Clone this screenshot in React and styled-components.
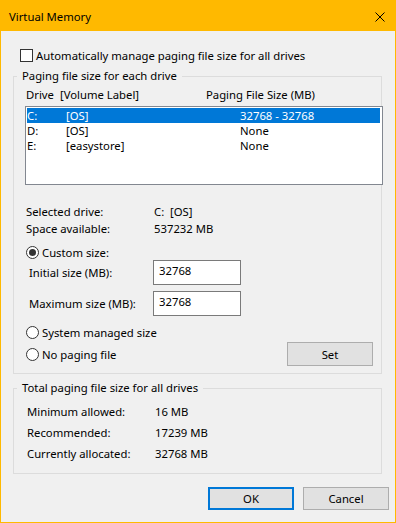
import React from 'react';
import styled, { createGlobalStyle } from 'styled-components';

const drives = [
  { letter: 'C:', label: '[OS]', size: '32768 - 32768', selected: true },
  { letter: 'D:', label: '[OS]', size: 'None' },
  { letter: 'E:', label: '[easystore]', size: 'None' },
];

const totals = [
  { label: 'Minimum allowed:', value: '16 MB' },
  { label: 'Recommended:', value: '17239 MB' },
  { label: 'Currently allocated:', value: '32768 MB' },
];

const GlobalStyle = createGlobalStyle`
  * { box-sizing: border-box; }
  html, body {
    margin: 0;
    padding: 0;
    background: #f0f0f0;
  }
  body {
    font-family: "Noto Sans", "Open Sans", sans-serif;
    font-size: 11.3px;
    color: #000;
  }
`;

const Window = styled.div`
  width: 396px;
  height: 523px;
  border: 1px solid #ffb900;
  background: #f0f0f0;
  display: flex;
  flex-direction: column;
`;

const TitleBar = styled.div`
  height: 30px;
  flex: none;
  background: #ffb900;
  display: flex;
  align-items: center;
  justify-content: space-between;
  padding-left: 8px;
  padding-top: 1px;
`;

const CloseIcon = styled.svg`
  width: 10px;
  height: 10px;
  margin-right: 10px;
`;

const Body = styled.div`
  display: flex;
  flex-direction: column;
  padding: 0 9px 0 12px;
`;

const CheckRow = styled.label`
  display: flex;
  align-items: center;
  gap: 3px;
  height: 15px;
  margin: 17px 0 0 7px;
`;

const Box = styled.span`
  width: 13px;
  height: 13px;
  border: 1px solid #333;
  background: #fff;
  flex: none;
`;

const Group = styled.fieldset`
  margin: ${(p) => p.$top}px 0 0 0;
  padding: 0;
  width: 369px;
  min-width: 0;
  border: 1px solid #dcdcdc;
`;

const Legend = styled.legend`
  margin-left: 3px;
  padding: 0 5px;
  line-height: 16px;
`;

const GroupInner = styled.div`
  display: flex;
  flex-direction: column;
  padding: 3px 8px 7px 12px;
`;

const Header = styled.div`
  display: grid;
  grid-template-columns: 180px 1fr;
  line-height: 16px;
`;

const HeaderLeft = styled.div`
  display: flex;
  gap: 6px;
`;

const ListBox = styled.div`
  margin: 3px 0 0 -1px;
  width: 358px;
  height: 79px;
  border: 1px solid #828790;
  background: #fff;
  padding: 1px 2px 1px 1px;
  display: flex;
  flex-direction: column;
`;

const ListRow = styled.div`
  display: grid;
  grid-template-columns: 39px 174px 1fr;
  height: 15px;
  line-height: 15px;
  overflow: hidden;
  background: ${(p) => (p.$selected ? '#0078d7' : 'transparent')};
  color: ${(p) => (p.$selected ? '#fff' : '#000')};
`;

const InfoGrid = styled.div`
  display: grid;
  grid-template-columns: 128px 1fr;
  grid-auto-rows: 17px;
  line-height: 17px;
  margin-top: 18px;
`;

const RadioRow = styled.label`
  display: flex;
  align-items: center;
  gap: 3px;
  height: 15px;
  margin-top: ${(p) => p.$top || 0}px;
`;

const Circle = styled.span`
  width: 13px;
  height: 13px;
  border-radius: 50%;
  border: 1px solid #333;
  background: #fff;
  flex: none;
  display: flex;
  align-items: center;
  justify-content: center;

  &::after {
    content: '';
    display: ${(p) => (p.$checked ? 'block' : 'none')};
    width: 7px;
    height: 7px;
    border-radius: 50%;
    background: #333;
  }
`;

const SizeRow = styled.div`
  display: flex;
  align-items: center;
  margin-top: ${(p) => p.$top}px;
  padding-left: 3px;
`;

const SizeLabel = styled.span`
  width: 124px;
`;

const Input = styled.div`
  width: 88px;
  height: 25px;
  border: 1px solid #7a7a7a;
  background: #fff;
  padding: 2px 0 0 5px;
  line-height: 16px;
`;

const BottomRow = styled.div`
  display: flex;
  align-items: center;
  justify-content: space-between;
  margin-top: 1px;
  padding-top: 1px;
`;

const Button = styled.button`
  width: 86px;
  height: ${(p) => p.$h || 24}px;
  font: inherit;
  color: #000;
  background: #e1e1e1;
  border: ${(p) => (p.$default ? '2px solid #0078d7' : '1px solid #adadad')};
  padding: 0;
`;

const TotalsGrid = styled.div`
  display: grid;
  grid-template-columns: 128px 1fr;
  grid-auto-rows: 21px;
  line-height: 21px;
  padding: 5px 0 9px 13px;
`;

const Actions = styled.div`
  display: flex;
  justify-content: flex-end;
  gap: 9px;
  margin: 13px -3px 0 0;
`;

export default function App() {
  return (
    <>
      <GlobalStyle />
      <Window>
        <TitleBar>
          <span>Virtual Memory</span>
          <CloseIcon viewBox="0 0 10 10">
            <path d="M0.5 0.5 L9.5 9.5 M9.5 0.5 L0.5 9.5" stroke="#000" strokeWidth="1" fill="none" />
          </CloseIcon>
        </TitleBar>
        <Body>
          <CheckRow>
            <Box />
            Automatically manage paging file size for all drives
          </CheckRow>

          <Group $top={5}>
            <Legend>Paging file size for each drive</Legend>
            <GroupInner>
              <Header>
                <HeaderLeft>
                  <span>Drive</span>
                  <span>[Volume Label]</span>
                </HeaderLeft>
                <span>Paging File Size (MB)</span>
              </Header>
              <ListBox>
                {drives.map((d) => (
                  <ListRow key={d.letter} $selected={d.selected}>
                    <span>{d.letter}</span>
                    <span>{d.label}</span>
                    <span>{d.size}</span>
                  </ListRow>
                ))}
              </ListBox>
              <InfoGrid>
                <span>Selected drive:</span>
                <span>C:&nbsp;&nbsp;[OS]</span>
                <span>Space available:</span>
                <span>537232 MB</span>
              </InfoGrid>
              <RadioRow $top={8}>
                <Circle $checked />
                Custom size:
              </RadioRow>
              <SizeRow $top={0}>
                <SizeLabel>Initial size (MB):</SizeLabel>
                <Input>32768</Input>
              </SizeRow>
              <SizeRow $top={6}>
                <SizeLabel>Maximum size (MB):</SizeLabel>
                <Input>32768</Input>
              </SizeRow>
              <RadioRow $top={9}>
                <Circle />
                System managed size
              </RadioRow>
              <BottomRow>
                <RadioRow>
                  <Circle />
                  No paging file
                </RadioRow>
                <Button>Set</Button>
              </BottomRow>
            </GroupInner>
          </Group>

          <Group $top={6}>
            <Legend>Total paging file size for all drives</Legend>
            <TotalsGrid>
              {totals.map((t) => (
                <React.Fragment key={t.label}>
                  <span>{t.label}</span>
                  <span>{t.value}</span>
                </React.Fragment>
              ))}
            </TotalsGrid>
          </Group>

          <Actions>
            <Button $default $h={23}>OK</Button>
            <Button $h={23}>Cancel</Button>
          </Actions>
        </Body>
      </Window>
    </>
  );
}
